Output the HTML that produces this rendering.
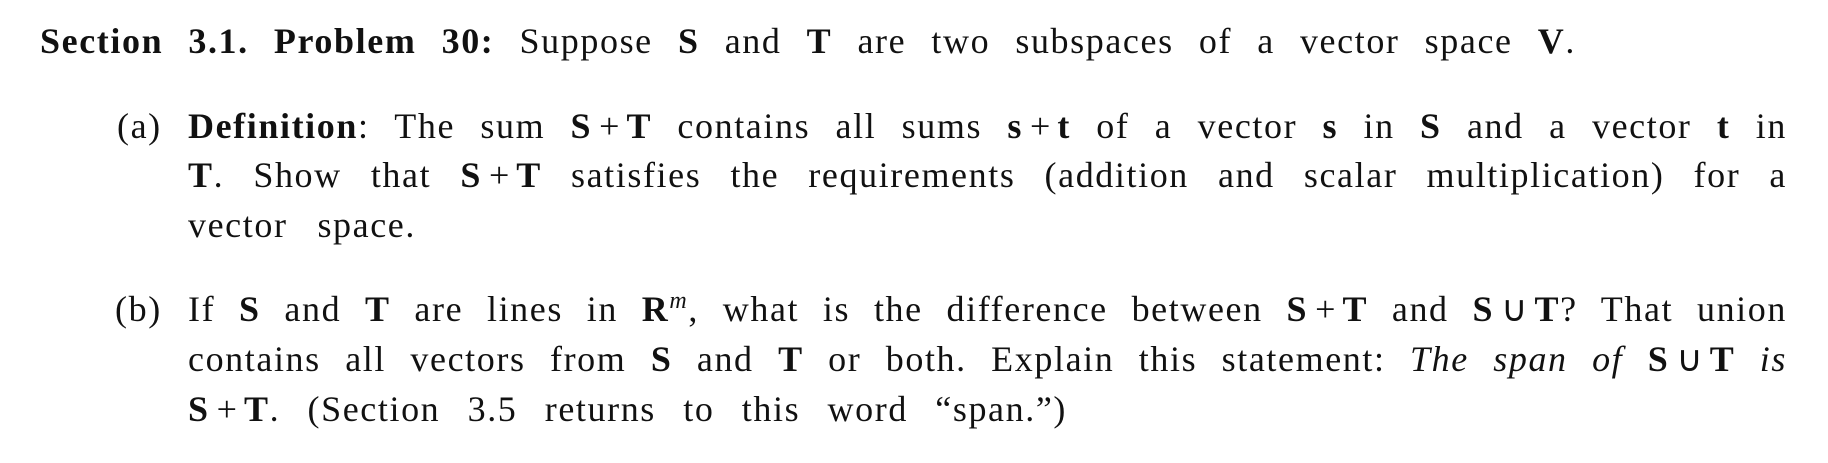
<!DOCTYPE html>
<html><head><meta charset="utf-8"><style>
body{margin:0;background:#fff;width:1828px;height:463px;overflow:hidden;position:relative;font-family:"Liberation Serif",serif;font-size:36px;letter-spacing:1.6px;color:#111;}
.l{position:absolute;line-height:50px;height:50px;white-space:nowrap;text-align:justify;text-align-last:justify;}
b{font-weight:bold}
.o{margin:0 7px;letter-spacing:0}
</style></head><body>
<div class="l" style="left:40px;top:16px;width:1536px"><b>Section 3.1. Problem 30:</b> Suppose <b>S</b> and <b>T</b> are two subspaces of a vector space <b>V</b>.</div>

<div class="l" style="left:117px;top:101px">(a)</div>
<div class="l" style="left:188px;top:101px;width:1599px"><b>Definition</b>: The sum <b>S</b><span class="o">+</span><b>T</b> contains all sums <b>s</b><span class="o">+</span><b>t</b> of a vector <b>s</b> in <b>S</b> and a vector <b>t</b> in</div>
<div class="l" style="left:188px;top:150px;width:1599px"><b>T</b>. Show that <b>S</b><span class="o">+</span><b>T</b> satisfies the requirements (addition and scalar multiplication) for a</div>
<div class="l" style="left:188px;top:200px;width:228px">vector space.</div>

<div class="l" style="left:115px;top:284px">(b)</div>
<div class="l" style="left:188px;top:284px;width:1599px">If <b>S</b> and <b>T</b> are lines in <b>R</b><sup style="font-style:italic;font-size:24px;line-height:0">m</sup>, what is the difference between <b>S</b><span class="o">+</span><b>T</b> and <b>S</b><span class="o">∪</span><b>T</b>? That union</div>
<div class="l" style="left:188px;top:334px;width:1599px">contains all vectors from <b>S</b> and <b>T</b> or both. Explain this statement: <i>The span of</i> <b>S</b><span class="o">∪</span><b>T</b> <i>is</i></div>
<div class="l" style="left:188px;top:384px;width:879px"><b>S</b><span class="o">+</span><b>T</b>. (Section 3.5 returns to this word “span.”)</div>
</body></html>
